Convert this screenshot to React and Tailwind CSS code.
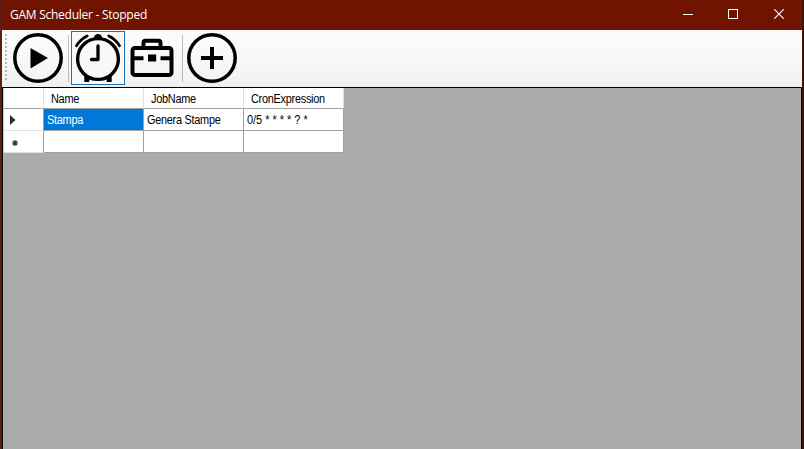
import React from 'react';

function TitleBar() {
  return (
    <header className="flex h-[30px] shrink-0 items-center justify-between bg-[#701300] pl-2 text-white">
      <h1 className="font-['Open_Sans',sans-serif] text-[12px] leading-[30px] tracking-[-0.26px] whitespace-nowrap">GAM Scheduler - Stopped</h1>
      <div className="flex h-full">
        <button aria-label="Minimize" className="flex w-[46px] items-center justify-center">
          <svg width="10" height="10" shapeRendering="crispEdges"><path d="M0 4.5H10" stroke="#fff" /></svg>
        </button>
        <button aria-label="Maximize" className="flex w-[44px] items-center justify-center pb-0.5">
          <svg width="10" height="10" shapeRendering="crispEdges"><rect x=".5" y=".5" width="9" height="9" fill="none" stroke="#fff" /></svg>
        </button>
        <button aria-label="Close" className="flex w-[47px] items-center justify-center pb-0.5">
          <svg width="10" height="10"><path d="M.3 .3L9.7 9.7M9.7 .3L.3 9.7" stroke="#fff" strokeWidth="1.2" /></svg>
        </button>
      </div>
    </header>
  );
}

function PlayIcon() {
  return (
    <svg width="50" height="50" viewBox="0 0 50 50">
      <circle cx="25" cy="25" r="23.2" fill="none" stroke="#000" strokeWidth="3.5" />
      <path d="M17.5 15L35 25L17.5 35.5Z" />
    </svg>
  );
}

function ClockIcon() {
  return (
    <svg width="52" height="52" viewBox="0 0 52 52" fill="none" stroke="#000">
      <circle cx="26" cy="27" r="20.4" strokeWidth="3.4" />
      <path d="M21.8 6C22 .6 30 .6 30.2 6Z" fill="#000" stroke="none" />
      <path d="M26 14V27.5H19.5" strokeWidth="3.3" strokeLinecap="round" strokeLinejoin="round" />
      <path d="M4.5 13.8C7.2 9.4 10.5 6.2 15.2 4M47.5 13.8C44.8 9.4 41.5 6.2 36.8 4" strokeWidth="2.8" strokeLinecap="round" />
      <path d="M14.8 44V50M37.2 44V50" strokeWidth="5" />
    </svg>
  );
}

function ToolboxIcon() {
  return (
    <svg width="44" height="40" viewBox="0 0 44 40" fill="none" stroke="#000" strokeWidth="4">
      <rect x="2.5" y="10" width="39" height="27" rx="2.5" />
      <path d="M13.5 9V5Q13.5 2.8 15.5 2.8H28.5Q30.5 2.8 30.5 5V9" />
      <path d="M3 20.3H13.5M30.5 20.3H41" />
      <rect x="18" y="16.5" width="8.2" height="7" fill="#000" stroke="none" />
    </svg>
  );
}

function AddIcon() {
  return (
    <svg width="50" height="50" viewBox="0 0 50 50" fill="none" stroke="#000">
      <circle cx="25" cy="25" r="23.2" strokeWidth="3.5" />
      <path d="M25 14V36M14 25H36" strokeWidth="4" />
    </svg>
  );
}

function Toolbar() {
  return (
    <div className="flex h-[57px] shrink-0 items-start bg-linear-to-b from-[#fcfcfc] via-[#f8f8f8] to-[#f0f0f0]">
      <div className="mt-1 ml-[3px] flex w-0.5 flex-col gap-0.5">
        {Array.from({ length: 12 }, (_, i) => <i key={i} className="size-0.5 bg-[#b9b9bd]" />)}
      </div>
      <button aria-label="Start" className="mt-[3px] ml-1.5"><PlayIcon /></button>
      <div className="mt-[5px] ml-[5px] h-[47px] w-px bg-[#bdbdbd]" />
      <button aria-label="Schedules" className="mt-px ml-0.5 flex h-[54px] w-[54px] border border-[#1874bd] bg-[#f8f8f8]"><ClockIcon /></button>
      <button aria-label="Jobs" className="mt-2 ml-[5px]"><ToolboxIcon /></button>
      <div className="mt-[5px] ml-2 h-[47px] w-px bg-[#bdbdbd]" />
      <button aria-label="Add" className="mt-[3px] ml-1"><AddIcon /></button>
    </div>
  );
}

function ScheduleGrid() {
  const head = 'flex h-full items-center border-r border-b border-r-[#e2e2e2] border-b-[#a0a0a0] pt-px pl-[6.5px] text-[12px] leading-4 whitespace-nowrap';
  const cell = 'flex h-full items-center border-r border-b border-[#a0a0a0] pl-[3px] text-[12px] leading-4 whitespace-nowrap';
  const label = 'inline-block origin-left scale-x-[.91] tracking-[-0.3px]';
  return (
    <div className="grid w-[341px] grid-cols-[40px_100px_100px_100px] grid-rows-[21px_22px_22px] border-l border-[#c8c8c8] font-['Liberation_Sans',Arial,sans-serif] text-black *:bg-white">
      <div className={head} />
      <div className={head}><span className={label}>Name</span></div>
      <div className={head}><span className={label}>JobName</span></div>
      <div className={head}><span className={label}>CronExpression</span></div>

      <div className="flex items-center border-r border-b border-r-[#a0a0a0] border-b-[#e2e2e2] pt-px pl-1.5">
        <svg width="6" height="10"><path d="M0 0L5.5 5L0 10Z" fill="#333" /></svg>
      </div>
      <div className={cell + ' bg-[#0078d7]! text-white'}><span className={label}>Stampa</span></div>
      <div className={cell}><span className={label}>Genera Stampe</span></div>
      <div className={cell}><span className="inline-block origin-left scale-x-[.91]">0/5 * * * * ? *</span></div>

      <div className="flex items-center border-r border-b border-r-[#a0a0a0] border-b-[#e2e2e2] pt-0.5 pl-2">
        <svg width="6" height="6" stroke="#333" strokeWidth="1.2"><path d="M3 0V6M0 3H6M.8 .8L5.2 5.2M5.2 .8L.8 5.2" /></svg>
      </div>
      <div className={cell} />
      <div className={cell} />
      <div className={cell} />
    </div>
  );
}

export default function App() {
  return (
    <div className="flex h-[449px] w-[804px] flex-col overflow-hidden border-x-2 border-l-[#54201a] border-r-[#3b140c]">
      <TitleBar />
      <Toolbar />
      <main className="min-h-0 flex-1 border-x border-t border-black bg-[#ababab]">
        <ScheduleGrid />
      </main>
    </div>
  );
}
